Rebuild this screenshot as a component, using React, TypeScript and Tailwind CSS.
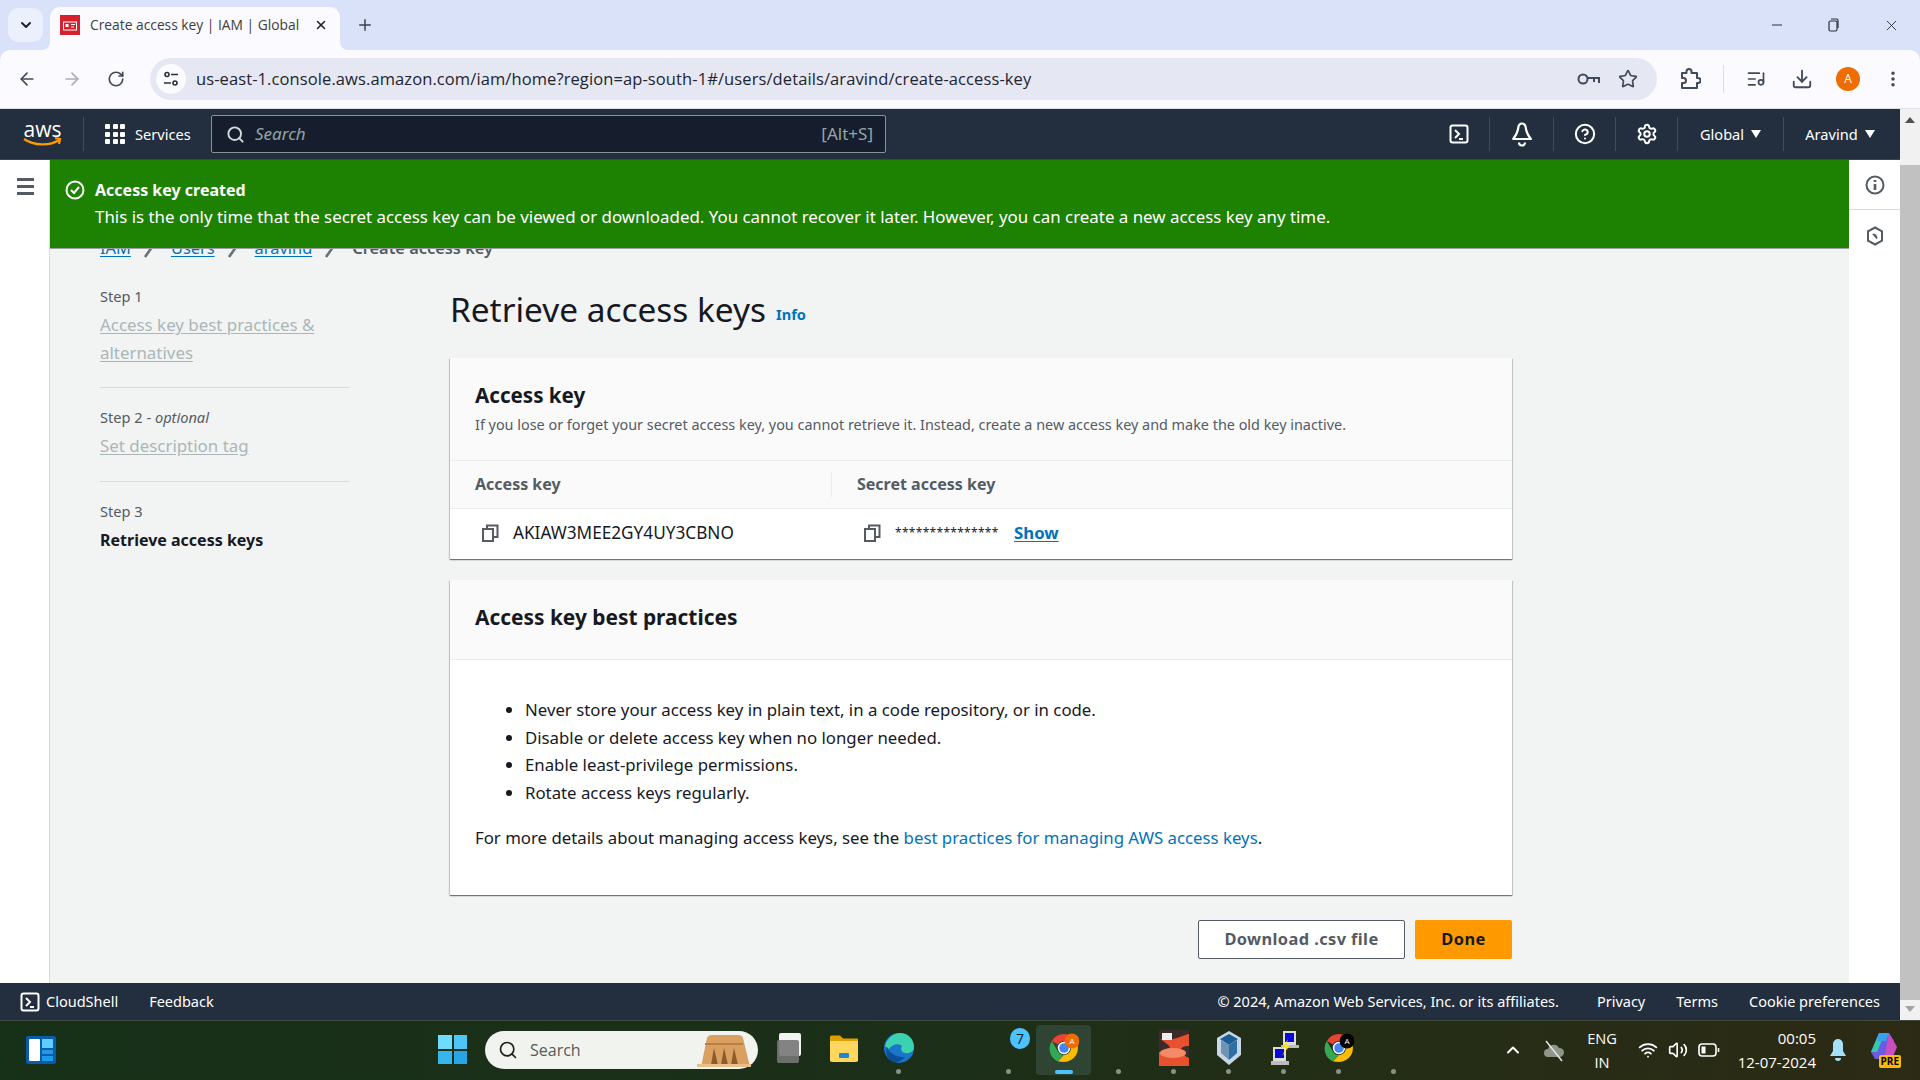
import {
  ArrowLeft,
  ArrowRight,
  ChevronDown,
  ChevronUp,
  CircleHelp,
  Download,
  EllipsisVertical,
  ListMusic,
  Minus,
  Plus,
  RotateCw,
  Search,
  Settings,
  Star,
  Volume2,
  Wifi,
  X,
} from 'lucide-react';

const CARD_SHADOW =
  'shadow-[0_1px_1px_0_rgba(0,28,36,0.4),1px_1px_1px_0_rgba(0,28,36,0.15),-1px_1px_1px_0_rgba(0,28,36,0.15)]';

function CopyIcon() {
  return (
    <svg width="18" height="18" viewBox="0 0 18 18" fill="none" stroke="#545b64" strokeWidth="2">
      <rect x="2" y="5" width="10" height="12" />
      <path d="M6 4V1.5h10.5V13H13" />
    </svg>
  );
}

function Caret() {
  return (
    <svg width="10" height="8" viewBox="0 0 10 8" fill="#fff">
      <path d="M0 0h10L5 8z" />
    </svg>
  );
}

function CloudShellIcon({ size = 20 }: { size?: number }) {
  return (
    <svg width={size} height={size} viewBox="0 0 20 20" fill="none" stroke="#fff" strokeWidth="2">
      <rect x="1.5" y="1.5" width="17" height="17" rx="2" />
      <path d="M6 6l4 4-4 4M10 15h4" />
    </svg>
  );
}

function TabBar() {
  return (
    <div className="flex h-[50px] items-end bg-[#d9e2f9] pl-[8px]">
      <div className="mb-[8px] flex h-[34px] w-[35px] items-center justify-center rounded-[10px] bg-[#ecf0fc]">
        <ChevronDown size={16} strokeWidth={3} color="#1f2430" />
      </div>
      <div className="relative ml-[7px] flex h-[43px] w-[290px] items-center rounded-t-[10px] bg-[#fafaff] pl-[10px] pb-[7px]">
        <svg className="absolute bottom-0 left-[-8px]" width="8" height="8" viewBox="0 0 8 8" fill="#fafaff">
          <path d="M8 0v8H0a8 8 0 0 0 8-8z" />
        </svg>
        <svg className="absolute bottom-0 right-[-8px]" width="8" height="8" viewBox="0 0 8 8" fill="#fafaff">
          <path d="M0 0v8h8a8 8 0 0 1-8-8z" />
        </svg>
        <svg width="20" height="20" viewBox="0 0 20 20">
          <rect width="20" height="20" fill="#d5202d" />
          <rect x="3.5" y="7" width="13" height="8" fill="none" stroke="#fff" strokeWidth="1" />
          <rect x="5.5" y="9" width="3" height="3" fill="#fff" />
          <path d="M11 9.5h4M11 12h3" stroke="#fff" strokeWidth="1" />
        </svg>
        <span className="ml-[10px] w-[224px] text-[13.8px] text-[#3c4043] font-['Open_Sans',sans-serif]">
          Create access key | IAM | Global
        </span>
        <X size={14} strokeWidth={2.6} color="#1f2430" />
      </div>
      <div className="mb-[8px] ml-[16px] flex h-[34px] items-center">
        <Plus size={18} strokeWidth={2} color="#3c4350" />
      </div>
      <div className="ml-auto mb-[10px] flex h-[30px] items-center gap-[41px] pr-[20px]">
        <Minus size={16} strokeWidth={1.5} color="#2a2f3a" />
        <svg className="mr-[2px]" width="14" height="14" viewBox="0 0 14 14" fill="none" stroke="#2a2f3a" strokeWidth="1.2">
          <rect x="3" y="3" width="8" height="10" rx="1.5" />
          <path d="M5 1h5.5a1.5 1.5 0 0 1 1.5 1.5V10" />
        </svg>
        <X size={17} strokeWidth={1.3} color="#2a2f3a" />
      </div>
    </div>
  );
}

function Toolbar() {
  return (
    <div className="flex h-[59px] items-center rounded-t-[10px] bg-[#fafaff] border-b border-[#dfe1e8]">
      <div className="flex w-[150px] items-center pl-[17px] gap-[25px]">
        <ArrowLeft size={20} strokeWidth={2} color="#414a5b" />
        <ArrowRight size={20} strokeWidth={2} color="#a9adb6" />
        <RotateCw size={18} strokeWidth={2.2} color="#414a5b" />
      </div>
      <div className="flex h-[42px] w-[1507px] items-center rounded-full bg-[#e5e8f3] pl-[6px] pr-[19px]">
        <div className="flex h-[30px] w-[30px] items-center justify-center rounded-full bg-[#fafaff]">
          <svg width="16" height="16" viewBox="0 0 16 16" fill="none" stroke="#2a2f3a" strokeWidth="1.6">
            <circle cx="4" cy="3.5" r="2" />
            <path d="M8 3.5h7M1 12h7" />
            <circle cx="12" cy="12" r="2" />
          </svg>
        </div>
        <span className="ml-[10px] flex-1 text-[16.5px] text-[#1f2430] font-['Open_Sans',sans-serif] tracking-[0.1px]">
          us-east-1.console.aws.amazon.com/iam/home?region=ap-south-1#/users/details/aravind/create-access-key
        </span>
        <svg width="24" height="14" viewBox="0 0 24 14" fill="none" stroke="#414a5b" strokeWidth="2">
          <circle cx="6" cy="7" r="4.5" />
          <path d="M10.5 6H22v5M17 6v4" />
        </svg>
        <Star size={20} strokeWidth={2} color="#414a5b" className="ml-[17px]" />
      </div>
      {/* chrome extensions puzzle piece */}
      <svg className="ml-[22px]" width="22" height="22" viewBox="0 0 22 22" fill="none" stroke="#414a5b" strokeWidth="2" strokeLinejoin="round">
        <path d="M3 5h4.500V3.500a2.500 2.500 0 0 1 5 0V5H18v5h1a2.500 2.500 0 0 1 0 5h-1v5H3v-5h1.500a2.500 2.500 0 0 0 0-5H3z" />
      </svg>
      <div className="ml-[22px] h-[28px] w-px bg-[#d5dcf0]" />
      <ListMusic size={20} strokeWidth={2} color="#414a5b" className="ml-[22px]" />
      <Download size={22} strokeWidth={2} color="#414a5b" className="ml-[25px]" />
      <div className="ml-[23px] flex h-[24px] w-[24px] items-center justify-center rounded-full bg-[#ef6c00] text-[12px] text-white font-['Open_Sans',sans-serif]">
        A
      </div>
      <EllipsisVertical size={20} strokeWidth={2.2} color="#414a5b" className="ml-[23px]" />
    </div>
  );
}

function AwsNav() {
  const sep = 'h-[34px] w-px bg-[#414d5c]';
  return (
    <div className="flex h-[51px] shrink-0 items-center bg-[#232f3e] text-white border-b border-[#3a4554]">
      <div className="flex w-[83px] justify-center pl-[2px]">
        <div className="relative h-[30px] w-[40px]">
          <span className="block text-center text-[21px] leading-[20px] font-['Open_Sans',sans-serif]">aws</span>
          <svg className="absolute left-0 top-[17px]" width="40" height="12" viewBox="0 0 40 12" fill="none" stroke="#ff9900" strokeWidth="2.2">
            <path d="M1 3c10 7 26 7 35 1M32 2l5 1-1 5" />
          </svg>
        </div>
      </div>
      <div className={sep} />
      <div className="ml-[21px] grid w-[20px] grid-cols-3 gap-[2.5px]">
        {Array.from({ length: 9 }).map((_, i) => (
          <div key={i} className="h-[5px] w-[5px] rounded-[1px] bg-white" />
        ))}
      </div>
      <span className="ml-[10px] mt-[1px] w-[58px] text-[14.6px]">Services</span>
      <div className="ml-[18px] flex h-[38px] w-[675px] items-center rounded-[2px] border border-[#879596] bg-[#161e2d] pl-[14px] pr-[12px]">
        <Search size={19} strokeWidth={2.4} color="#d5dbdb" />
        <span className="ml-[10px] flex-1 text-[17px] italic text-[#95a5a6]">Search</span>
        <span className="text-[17px] text-[#95a5a6]">[Alt+S]</span>
      </div>
      <div className="ml-auto flex items-center">
        <div className="flex w-[60px] justify-center">
          <CloudShellIcon />
        </div>
        <div className={sep} />
        <div className="flex w-[63px] justify-center">
          <svg width="22" height="26" viewBox="0 0 22 26" fill="none" stroke="#fff" strokeWidth="2.2">
            <path d="M11 2.5c2.5 0 3.5 2 3.8 4.5.5 4 2 7 5 11H2.2c3-4 4.500-7 5-11 .3-2.500 1.300-4.500 3.800-4.500z" strokeLinejoin="round" />
            <path d="M8 21.500a3 3 0 0 0 6 0" />
          </svg>
        </div>
        <div className={sep} />
        <div className="flex w-[61px] justify-center">
          <CircleHelp size={22} strokeWidth={2.2} />
        </div>
        <div className={sep} />
        <div className="flex w-[61px] justify-center">
          <Settings size={22} strokeWidth={2.2} />
        </div>
        <div className={sep} />
        <div className="flex w-[105px] items-center justify-center gap-[7px] pt-[1px] text-[14.6px]">
          Global <Caret />
        </div>
        <div className={sep} />
        <div className="flex w-[116px] items-center justify-center gap-[7px] pr-[4px] pt-[1px] text-[14.6px]">
          Aravind <Caret />
        </div>
      </div>
    </div>
  );
}

function Banner() {
  return (
    <div className="absolute inset-x-0 top-0 z-10 h-[89px] border-b border-[#9aa0a4] bg-[#1d8102] pl-[15px] pt-[18px] text-white">
      <div className="flex h-[24px] items-center">
        <svg width="20" height="20" viewBox="0 0 20 20" fill="none" stroke="#fff" strokeWidth="2">
          <circle cx="10" cy="10" r="8.5" />
          <path d="M6 10l3 3 5-6" />
        </svg>
        <span className="ml-[10px] text-[16px] font-bold">Access key created</span>
      </div>
      <p className="mt-[3px] pl-[30px] text-[16.9px] leading-[24px]">
        This is the only time that the secret access key can be viewed or downloaded. You cannot recover it later.
        However, you can create a new access key any time.
      </p>
    </div>
  );
}

function Breadcrumbs() {
  const link = 'text-[#0073bb] underline underline-offset-2';
  const chevron = (
    <svg width="16" height="22" viewBox="0 0 16 22" fill="none" stroke="#687078" strokeWidth="2.6" className="mx-[12px]">
      <path d="M2 20L14 3" />
    </svg>
  );
  return (
    <div className="flex h-[24px] items-center text-[16.4px]">
      <span className={link}>IAM</span>
      {chevron}
      <span className={link}>Users</span>
      {chevron}
      <span className={link}>aravind</span>
      {chevron}
      <span className="font-semibold text-[#545b64]">Create access key</span>
    </div>
  );
}

function Steps() {
  const stepLabel = 'text-[14.6px] leading-[20px] text-[#545b64]';
  const disabled = 'mt-[5px] text-[16.9px] leading-[28px] text-[#aab7b8] underline underline-offset-2';
  return (
    <aside className="w-[250px] shrink-0 pt-[16px]">
      <div className={stepLabel}>Step 1</div>
      <div className={disabled}>
        Access key best practices &amp;
        <br />
        alternatives
      </div>
      <div className="mt-[20px] mb-[19px] h-px bg-[#d5dbdb]" />
      <div className={stepLabel}>
        Step 2 - <i>optional</i>
      </div>
      <div className={disabled}>Set description tag</div>
      <div className="mt-[21px] mb-[19px] h-px bg-[#d5dbdb]" />
      <div className={stepLabel}>Step 3</div>
      <div className="mt-[5px] text-[16px] font-bold leading-[28px] text-[#16191f]">Retrieve access keys</div>
    </aside>
  );
}

function AccessKeyCard() {
  return (
    <section className={`bg-white ${CARD_SHADOW}`}>
      <div className="h-[103px] border-b border-[#eaeded] bg-[#fafafa] px-[25px] pt-[22px]">
        <h2 className="text-[20.6px] font-bold leading-[30px] text-[#16191f]">Access key</h2>
        <p className="mt-[5px] text-[14.4px] leading-[20px] text-[#545b64]">
          If you lose or forget your secret access key, you cannot retrieve it. Instead, create a new access key and
          make the old key inactive.
        </p>
      </div>
      <div className="flex h-[48px] items-center border-b border-[#eaeded] bg-[#fafafa] pb-[1px] text-[16px] font-bold text-[#545b64]">
        <div className="w-[381px] pl-[25px]">Access key</div>
        <div className="h-[25px] w-px bg-[#eaeded]" />
        <div className="pl-[25px]">Secret access key</div>
      </div>
      <div className="flex h-[50px] items-center pb-[2px] text-[17.2px] text-[#16191f]">
        <div className="flex w-[382px] items-center pl-[31px]">
          <CopyIcon />
          <span className="ml-[14px]">AKIAW3MEE2GY4UY3CBNO</span>
        </div>
        <div className="flex items-center pl-[31px]">
          <CopyIcon />
          <span className="ml-[14px] w-[119px] text-[12px] leading-[12px] tracking-[0.3px]">***************</span>
          <span className="text-[16.8px] font-bold text-[#0073bb] underline underline-offset-2">Show</span>
        </div>
      </div>
    </section>
  );
}

function BestPracticesCard() {
  return (
    <section className={`mt-[21px] bg-white ${CARD_SHADOW}`}>
      <div className="flex h-[80px] items-center border-b border-[#eaeded] bg-[#fafafa] px-[25px] pb-[3px]">
        <h2 className="text-[20.9px] font-bold text-[#16191f]">Access key best practices</h2>
      </div>
      <div className="h-[235px] px-[25px] pt-[36px] text-[16.8px] text-[#16191f]">
        <ul className="list-disc pl-[50px] leading-[27.7px]">
          <li>Never store your access key in plain text, in a code repository, or in code.</li>
          <li>Disable or delete access key when no longer needed.</li>
          <li>Enable least-privilege permissions.</li>
          <li>Rotate access keys regularly.</li>
        </ul>
        <p className="mt-[17px] leading-[28px]">
          For more details about managing access keys, see the{' '}
          <span className="text-[#0073bb]">best practices for managing AWS access keys</span>.
        </p>
      </div>
    </section>
  );
}

function MainColumn() {
  return (
    <div className="w-[1062px] shrink-0">
      <div className="flex h-[78px] items-center pb-[1px]">
        <h1 className="text-[33.4px] leading-[40px] text-[#16191f]">Retrieve access keys</h1>
        <span className="ml-[10px] mt-[12px] text-[14.6px] font-bold text-[#0073bb]">Info</span>
      </div>
      <div className="mt-[10px]">
        <AccessKeyCard />
        <BestPracticesCard />
      </div>
      <div className="mt-[25px] flex justify-end gap-[10px]">
        <div className="flex h-[39px] w-[207px] items-center justify-center rounded-[2px] border border-[#545b64] bg-white pb-[1px] text-[16.4px] font-bold tracking-[0.4px] text-[#545b64]">
          Download .csv file
        </div>
        <div className="flex h-[39px] w-[97px] items-center justify-center rounded-[2px] bg-[#ff9900] pb-[1px] text-[16.4px] font-bold tracking-[0.4px] text-[#16191f]">
          Done
        </div>
      </div>
    </div>
  );
}

function RightRail() {
  return (
    <div className="w-[51px] shrink-0 bg-white">
      <div className="flex h-[50px] items-center justify-center border-b border-[#d5dbdb]">
        <svg width="20" height="20" viewBox="0 0 20 20" fill="none" stroke="#545b64" strokeWidth="2">
          <circle cx="10" cy="10" r="8.5" />
          <path d="M10 9v6M10 5v2" strokeWidth="2.6" />
        </svg>
      </div>
      <div className="flex h-[52px] items-center justify-center">
        <svg width="20" height="20" viewBox="0 0 20 20" fill="none" stroke="#545b64" strokeWidth="2">
          <path d="M10 1.5l7 3.8v9.4l-7 3.8-7-3.8V5.3z" />
          <path d="M7 8a4 4 0 0 1 5 5.5L8 9z" fill="#545b64" stroke="none" />
        </svg>
      </div>
    </div>
  );
}

function Footer() {
  return (
    <div className="flex h-[37px] shrink-0 items-center bg-[#232f3e] pl-[20px] pr-[20px] text-[14.5px] text-white">
      <CloudShellIcon />
      <span className="ml-[6px]">CloudShell</span>
      <span className="ml-[31px]">Feedback</span>
      <span className="ml-auto">© 2024, Amazon Web Services, Inc. or its affiliates.</span>
      <span className="ml-[38px]">Privacy</span>
      <span className="ml-[31px]">Terms</span>
      <span className="ml-[31px]">Cookie preferences</span>
    </div>
  );
}

function Scrollbar() {
  return (
    <div className="flex w-[20px] shrink-0 flex-col items-center bg-[#f1f1f1]">
      <div className="flex h-[56px] w-full justify-center pt-[8px]">
        <svg width="10" height="6" viewBox="0 0 10 6" fill="#505050">
          <path d="M5 0l5 6H0z" />
        </svg>
      </div>
      <div className="w-full flex-1 bg-[#c1c1c1]" />
      <div className="flex h-[20px] w-full justify-center pt-[6px]">
        <svg width="10" height="6" viewBox="0 0 10 6" fill="#a3a3a3">
          <path d="M5 6l5-6H0z" />
        </svg>
      </div>
    </div>
  );
}

function ChromeLogo({ badge }: { badge?: 'orange' | 'black' }) {
  return (
    <svg width="30" height="30" viewBox="0 0 30 30">
      <path d="M15 1a14 14 0 0 1 12.1 7H15a7 7 0 0 0-6.1 3.5L2.9 8A14 14 0 0 1 15 1z" fill="#ea4335" />
      <path d="M2.9 8l6 10.5A7 7 0 0 0 15 22l-6 6.5A14 14 0 0 1 2.9 8z" fill="#34a853" />
      <path d="M27.1 8A14 14 0 0 1 15 29l-6-.5 6-6.5a7 7 0 0 0 6-10.5L15 8z" fill="#fbbc04" />
      <circle cx="15" cy="15" r="5.5" fill="#4285f4" stroke="#fff" strokeWidth="1.4" />
      {badge && <circle cx="23" cy="8" r="7.5" fill={badge === 'orange' ? '#ef6c00' : '#000'} />}
      {badge && (
        <text x="23" y="11" textAnchor="middle" fontSize="8" fill="#fff" fontFamily="Open Sans">
          A
        </text>
      )}
    </svg>
  );
}

function Slot({ children, dot = true, active = false }: { children?: React.ReactNode; dot?: boolean; active?: boolean }) {
  return (
    <div
      className={`relative flex h-[50px] w-[55px] shrink-0 items-center justify-center pb-[4px] ${active ? 'rounded-[4px] bg-[#2f4433]' : ''}`}
    >
      {children}
      {dot && !active && <div className="absolute bottom-[1px] h-[5px] w-[5px] rounded-full bg-[#8c9089]" />}
      {active && <div className="absolute bottom-[1px] h-[4px] w-[18px] rounded-full bg-[#4cc2ff]" />}
    </div>
  );
}

function Taskbar() {
  return (
    <div className="flex h-[60px] shrink-0 items-center border-t border-[#3f4a3a] bg-gradient-to-r from-[#173018] via-[#1c2f18] to-[#2c2a14] pb-[2px] text-white font-['Open_Sans',sans-serif]">
      {/* widgets */}
      <div className="ml-[26px] flex h-[28px] w-[30px] gap-[2px] rounded-[2px] bg-[#0a5cab] p-[3px]">
        <div className="w-[11px] rounded-[1px] bg-white" />
        <div className="flex flex-1 flex-col gap-[2px]">
          <div className="flex-[2] bg-[#60cdff]" />
          <div className="flex-1 bg-[#1c9be8]" />
          <div className="flex-1 bg-[#1c9be8]" />
        </div>
      </div>
      {/* start */}
      <div className="ml-[382px] grid h-[29px] w-[29px] grid-cols-2 gap-[2px]">
        <div className="bg-[#6fdcff]" />
        <div className="bg-[#4dc6f7]" />
        <div className="bg-[#37b5ef]" />
        <div className="bg-[#27a5e6]" />
      </div>
      {/* search */}
      <div className="ml-[18px] flex h-[38px] w-[273px] items-center rounded-full bg-[#f1f3ef] pl-[13px] pr-[3px]">
        <Search size={20} strokeWidth={2} color="#1f1f1f" />
        <span className="ml-[12px] flex-1 text-[16px] text-[#5a5a5a]">Search</span>
        <svg width="62" height="34" viewBox="0 0 62 34">
          <path d="M8 34L14 5q1-3 5-3h26q4 0 5 3l7 29z" fill="#d9a061" />
          <path d="M12 11h38" stroke="#b97e43" strokeWidth="2" />
          <path d="M18 32l3-17 4 17zM28 32l3-17 4 17zM38 32l3-17 4 17z" fill="#8d5a2a" />
          <path d="M4 34h54v-3H4z" fill="#e8c08a" />
        </svg>
      </div>
      <div className="ml-[3px] flex">
        <Slot dot={false}>
          <div className="relative h-[30px] w-[30px]">
            <div className="absolute right-[3px] top-0 h-[23px] w-[22px] rounded-[2px] bg-[#f2f2f2]" />
            <div className="absolute bottom-0 left-[3px] h-[23px] w-[22px] rounded-[2px] bg-[#777]/90" />
          </div>
        </Slot>
        <Slot dot={false}>
          <svg width="30" height="30" viewBox="0 0 30 30">
            <path d="M1 4a1.500 1.500 0 0 1 1.500-1.500H11l3 3h14a1 1 0 0 1 1 1V28H1z" fill="#e0a100" />
            <path d="M1 8h28v19a2 2 0 0 1-2 2H3a2 2 0 0 1-2-2z" fill="#ffd75e" />
            <rect x="10" y="20" width="10" height="5" rx="1" fill="#1e88d2" />
          </svg>
        </Slot>
        <Slot>
          <svg width="32" height="32" viewBox="0 0 32 32">
            <circle cx="16" cy="16" r="15" fill="#1b75c9" />
            <path d="M2 14C4 5 12 1 17 1c8 0 14 6 14 14 0 5-5 7-9 6-5-1-4-6-3-7-3-3-10-2-13 3-2-2-4-2-4-3z" fill="#3ad2b0" />
            <path d="M10 30c-6-3-8-10-6-15 2 5 9 11 18 10-3 4-8 6-12 5z" fill="#0c4f99" />
          </svg>
        </Slot>
      </div>
      <div className="ml-[55px] flex">
        <Slot>
          <div className="absolute left-[29px] top-[3px] flex h-[21px] w-[20px] items-center justify-center rounded-full bg-[#4cc2ff] text-[14px] text-[#10202c]">
            7
          </div>
        </Slot>
        <Slot active>
          <ChromeLogo badge="orange" />
        </Slot>
        <Slot />
        <Slot>
          <svg width="30" height="36" viewBox="0 0 30 36">
            <rect width="30" height="36" rx="1" fill="#3b2b2b" />
            <path d="M0 8c10 6 26-4 30-4v12C20 16 18 22 30 28v8H0V22c10 0 14-4 8-8z" fill="#e8502e" />
            <ellipse cx="14" cy="23" rx="13" ry="5" fill="#f58a66" />
            <rect x="3" y="3" width="10" height="7" fill="#eee" />
          </svg>
        </Slot>
        <Slot>
          <svg width="28" height="36" viewBox="0 0 28 36">
            <path d="M14 1l12 7v17l-12 10L2 25V8z" fill="#c7d7e8" />
            <path d="M14 15L5 9l9-5 9 5z" fill="#1d5c94" />
            <path d="M14 15v15l-8-7V10z" fill="#6f93b5" />
            <path d="M14 15v15l8-7V10z" fill="#2e6ea6" />
          </svg>
        </Slot>
        <Slot>
          <svg width="30" height="36" viewBox="0 0 30 36">
            <rect x="14" y="1" width="13" height="14" fill="#ddd" />
            <rect x="16" y="3" width="9" height="9" fill="#0a0ad8" />
            <rect x="4" y="17" width="13" height="14" fill="#ddd" />
            <rect x="6" y="19" width="9" height="9" fill="#0a0ad8" />
            <rect x="2" y="31" width="18" height="4" fill="#bbb" />
            <rect x="12" y="15" width="18" height="3" fill="#bbb" />
            <path d="M19 9l-6 9h4l-4 8 8-11h-4z" fill="#ffe400" />
          </svg>
        </Slot>
        <Slot>
          <ChromeLogo badge="black" />
        </Slot>
        <Slot />
      </div>
      <ChevronUp size={20} strokeWidth={2.4} className="ml-[82px]" />
      <svg width="24" height="24" viewBox="0 0 24 24" className="ml-[19px]">
        <path d="M6 19a4 4 0 0 1 0-8 6 6 0 0 1 11-1 4.500 4.500 0 0 1 1 9z" fill="#8d9689" />
        <path d="M4 3l16 20" stroke="#e8e8e8" strokeWidth="1.5" />
      </svg>
      <div className="ml-[16px] w-[40px] text-center text-[14.6px] leading-[24px]">
        ENG
        <br />
        IN
      </div>
      <Wifi size={20} strokeWidth={2.2} className="ml-[16px]" />
      <Volume2 size={20} strokeWidth={2} className="ml-[10px]" />
      <svg width="22" height="14" viewBox="0 0 22 14" fill="none" stroke="#fff" strokeWidth="1.6" className="ml-[10px]">
        <rect x="1" y="1" width="17" height="12" rx="3" />
        <rect x="3.5" y="3.5" width="4" height="7" fill="#fff" stroke="none" />
        <path d="M20.5 5v4" />
      </svg>
      <div className="w-[96px] text-right text-[15px] leading-[24px]">
        00:05
        <br />
        12-07-2024
      </div>
      <svg width="18" height="24" viewBox="0 0 18 24" className="ml-[13px]">
        <path d="M9 1a5 5 0 0 1 5 5v7l3 5H1l3-5V6a5 5 0 0 1 5-5z" fill="#a6e0f7" />
        <path d="M6 20h6a3 3 0 0 1-6 0z" fill="#a6e0f7" />
      </svg>
      <div className="relative ml-[22px] h-[36px] w-[32px]">
        <svg width="30" height="28" viewBox="0 0 30 28">
          <path d="M10 1h10l5 8-10 18H6L2 20z" fill="#6a5be2" />
          <path d="M2 20L10 1h6l-8 19z" fill="#37c8ab" />
          <path d="M20 1l8 14-5 12h-8z" fill="#c94fc0" />
          <path d="M10 1h10l-3 8H8z" fill="#39a0ed" />
        </svg>
        <div className="absolute bottom-0 right-0 rounded-[2px] bg-[#ffb900] px-[2px] text-[10px] font-bold leading-[13px] text-black">
          PRE
        </div>
      </div>
    </div>
  );
}

export default function App() {
  return (
    <div className="flex h-screen w-full flex-col overflow-hidden bg-[#d9e2f9] font-['Noto_Sans',sans-serif]">
      <TabBar />
      <Toolbar />
      <div className="flex min-h-0 flex-1">
        <div className="flex min-w-0 flex-1 flex-col">
          <AwsNav />
          <div className="flex min-h-0 flex-1">
            <div className="w-[50px] shrink-0 border-r border-[#d5dbdb] bg-white pl-[17px] pt-[18px]">
              <div className="flex w-[17px] flex-col gap-[4px]">
                <div className="h-[3px] bg-[#545b64]" />
                <div className="h-[3px] bg-[#545b64]" />
                <div className="h-[3px] bg-[#545b64]" />
              </div>
            </div>
            <main className="relative min-w-0 flex-1 overflow-hidden bg-[#f2f3f3] pl-[50px] pt-[76px]">
              <Banner />
              <Breadcrumbs />
              <div className="mt-[10px] flex gap-[100px]">
                <Steps />
                <MainColumn />
              </div>
            </main>
            <RightRail />
          </div>
          <Footer />
        </div>
        <Scrollbar />
      </div>
      <Taskbar />
    </div>
  );
}
